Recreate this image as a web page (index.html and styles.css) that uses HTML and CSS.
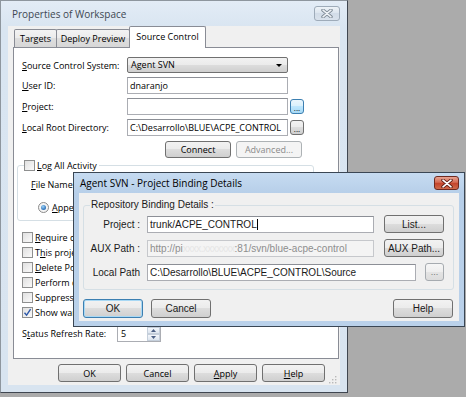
FILE: index.html
```html
<!DOCTYPE html>
<html lang="en">
<head>
    <meta charset="UTF-8">
    <title>Properties of Workspace</title>
    <link rel="stylesheet" href="styles.css">
</head>
<body>
    <!-- Main properties window (inactive) -->
    <div class="window main-window">
        <div class="titlebar">
            <span class="title">Properties of Workspace</span>
            <span class="close-btn inactive">
                <svg width="12" height="9" viewBox="0 0 12 9"><path d="M2 1.2 L10 7.8 M10 1.2 L2 7.8" stroke="#7d8995" stroke-width="3.4" stroke-linecap="round"/><path d="M2 1.2 L10 7.8 M10 1.2 L2 7.8" stroke="#eef2f6" stroke-width="1.6" stroke-linecap="round"/></svg>
            </span>
        </div>
        <div class="client">
            <div class="tabs">
                <div class="tab tab-targets">Targets</div>
                <div class="tab tab-deploy">Deploy Preview</div>
                <div class="tab tab-source selected">Source Control</div>
            </div>
            <div class="tab-panel">
                <div class="field-row combo-row">
                    <label><u>S</u>ource Control System:</label>
                    <div class="combo">Agent SVN<span class="combo-arrow"></span></div>
                </div>
                <div class="field-row">
                    <label><u>U</u>ser ID:</label>
                    <div class="textbox">dnaranjo</div>
                </div>
                <div class="field-row">
                    <label><u>P</u>roject:</label>
                    <div class="textbox"></div>
                    <div class="btn dots-btn hot">...</div>
                </div>
                <div class="field-row">
                    <label><u>L</u>ocal Root Directory:</label>
                    <div class="textbox">C:\Desarrollo\BLUE\ACPE_CONTROL</div>
                    <div class="btn dots-btn">...</div>
                </div>
                <div class="connect-row">
                    <div class="btn connect-btn">Connect</div>
                    <div class="btn connect-btn disabled">Advanced...</div>
                </div>
                <fieldset class="log-group">
                    <legend><span class="checkbox"></span><span><u>L</u>og All Activity</span></legend>
                    <div class="file-row">
                        <label><u>F</u>ile Name:</label>
                        <div class="textbox file-box"></div>
                    </div>
                    <div class="radio-row">
                        <span class="radio"></span><span><u>A</u>ppend</span>
                    </div>
                </fieldset>
                <div class="check-list">
                    <div class="check-row"><span class="checkbox"></span><span><u>R</u>equire comments</span></div>
                    <div class="check-row"><span class="checkbox"></span><span>T<u>h</u>is project</span></div>
                    <div class="check-row"><span class="checkbox"></span><span><u>D</u>elete Pool</span></div>
                    <div class="check-row"><span class="checkbox"></span><span>Perform check</span></div>
                    <div class="check-row"><span class="checkbox"></span><span>Suppress</span></div>
                    <div class="check-row"><span class="checkbox checked"><svg width="9" height="9" viewBox="0 0 9 9"><path d="M1.5 4.8 L3.6 7.2 L7.6 1.2" fill="none" stroke="#2d58a8" stroke-width="1.4"/></svg></span><span>Show warnings</span></div>
                </div>
                <div class="status-row">
                    <label>S<u>t</u>atus Refresh Rate:</label>
                    <div class="spinner">
                        <span class="spin-value">5</span>
                        <span class="spin-buttons">
                            <span class="spin-btn"><svg width="5" height="3" viewBox="0 0 5 3"><path d="M0 3 L2.5 0 L5 3Z" fill="#4d6185"/></svg></span>
                            <span class="spin-btn"><svg width="5" height="3" viewBox="0 0 5 3"><path d="M0 0 L2.5 3 L5 0Z" fill="#4d6185"/></svg></span>
                        </span>
                    </div>
                </div>
            </div>
            <div class="button-row">
                <div class="btn main-btn">OK</div>
                <div class="btn main-btn">Cancel</div>
                <div class="btn main-btn"><span><u>A</u>pply</span></div>
                <div class="btn main-btn"><span><u>H</u>elp</span></div>
            </div>
            <svg class="grip" width="9" height="9" viewBox="0 0 9 9">
                <rect x="7" y="1" width="1.4" height="1.4" fill="#b9b9b9"/>
                <rect x="4" y="4" width="1.4" height="1.4" fill="#b9b9b9"/>
                <rect x="7" y="4" width="1.4" height="1.4" fill="#b9b9b9"/>
                <rect x="1" y="7" width="1.4" height="1.4" fill="#b9b9b9"/>
                <rect x="4" y="7" width="1.4" height="1.4" fill="#b9b9b9"/>
                <rect x="7" y="7" width="1.4" height="1.4" fill="#b9b9b9"/>
            </svg>
        </div>
    </div>

    <!-- Binding details dialog (active, on top) -->
    <div class="window binding-dialog">
        <div class="titlebar">
            <span class="title">Agent SVN - Project Binding Details</span>
            <span class="close-btn active">
                <svg width="12" height="9" viewBox="0 0 12 9"><path d="M2 1.2 L10 7.8 M10 1.2 L2 7.8" stroke="#5e1e14" stroke-width="3.4" stroke-linecap="round"/><path d="M2 1.2 L10 7.8 M10 1.2 L2 7.8" stroke="#ffffff" stroke-width="1.7" stroke-linecap="round"/></svg>
            </span>
        </div>
        <div class="client dialog-client">
            <fieldset class="binding-group">
                <legend>Repository Binding Details :</legend>
                <div class="bind-row">
                    <label>Project :</label>
                    <div class="textbox bind-box">trunk/ACPE_CONTROL<span class="caret"></span></div>
                    <div class="btn bind-btn">List...</div>
                </div>
                <div class="bind-row">
                    <label>AUX Path :</label>
                    <div class="textbox bind-box readonly">http://pi<span class="redacted">xxxx.xxxxxxx</span>:81/svn/blue-acpe-control</div>
                    <div class="btn bind-btn">AUX Path...</div>
                </div>
                <div class="bind-row">
                    <label>Local Path</label>
                    <div class="textbox bind-box local-box">C:\Desarrollo\BLUE\ACPE_CONTROL\Source</div>
                    <div class="btn browse-btn">...</div>
                </div>
            </fieldset>
            <div class="dialog-buttons">
                <div class="btn dlg-btn default">OK</div>
                <div class="btn dlg-btn">Cancel</div>
                <div class="btn dlg-btn help-btn">Help</div>
            </div>
        </div>
    </div>
</body>
</html>
```

FILE: styles.css
```css
* {
    box-sizing: border-box;
}

body {
    margin: 0;
    width: 466px;
    height: 397px;
    overflow: hidden;
    position: relative;
    background: #ababab;
    font-family: "Open Sans", "Noto Sans", sans-serif;
    font-size: 9px;
    color: #000;
}

label {
    white-space: nowrap;
}

/* Window frames */
.window {
    display: flex;
    flex-direction: column;
    border: 1px solid #5f6973;
}

.main-window {
    width: 348px;
    height: 393px;
    background: linear-gradient(#e3ecf6, #d9e5f1 26px, #d8e4f0);
    border-color: #8e969e #3f4650 #3f4650 #8e969e;
}

.titlebar {
    height: 25px;
    flex-shrink: 0;
    display: flex;
    align-items: center;
    justify-content: space-between;
    padding: 0 7px 0 11px;
}

.title {
    font-size: 10px;
    color: #3d4752;
    white-space: nowrap;
}

.close-btn {
    width: 26px;
    height: 15px;
    border-radius: 3px;
    display: flex;
    align-items: center;
    justify-content: center;
}

.close-btn.inactive {
    border: 1px solid #9eabb9;
    background: linear-gradient(#eef3f8, #dbe4ee 50%, #d2dce8 50%, #d9e2ec);
}

.close-btn.active {
    border: 1px solid #6e2a20;
    background: linear-gradient(#e8a393, #d56a52 45%, #c4432b 50%, #cf6a4a);
}

.client {
    flex: 1;
    margin: 0 7px 7px;
    background: #f0f0f0;
    position: relative;
}

/* Tabs */
.tabs {
    height: 21px;
    display: flex;
    align-items: flex-end;
    margin-left: 6px;
}

.tab {
    height: 18px;
    display: flex;
    align-items: center;
    justify-content: center;
    border: 1px solid #898c95;
    border-bottom: none;
    border-radius: 2px 2px 0 0;
    background: linear-gradient(#f3f3f3, #ebebeb 50%, #dedede 50%, #d7d7d7);
    white-space: nowrap;
}

.tab-targets {
    width: 43px;
}

.tab-deploy {
    width: 74px;
    margin-left: -1px;
}

.tab-source {
    width: 77px;
    margin-left: -1px;
}

.tab.selected {
    height: 22px;
    margin-bottom: -1px;
    background: #fff;
    position: relative;
    z-index: 1;
    padding-bottom: 2px;
}

.tab-panel {
    width: 326px;
    height: 312px;
    margin-left: 5px;
    border: 1px solid #898c95;
    background: #fff;
    padding-top: 9px;
}

/* Form rows */
.field-row {
    display: grid;
    grid-template-columns: 103px 161px 14px;
    column-gap: 2px;
    align-items: center;
    height: 17px;
    margin: 0 0 4px 8px;
}

.combo-row {
    height: 16px;
}

.textbox {
    height: 17px;
    border: 1px solid #abadb3;
    border-top-color: #8c8f96;
    background: #fff;
    padding: 0 2px;
    line-height: 15px;
    white-space: nowrap;
    overflow: hidden;
}

.combo {
    height: 16px;
    border: 1px solid #707070;
    border-radius: 2px;
    background: linear-gradient(#f2f2f2, #ebebeb 50%, #dddddd 50%, #cfcfcf);
    padding: 0 3px;
    line-height: 14px;
    position: relative;
}

.combo-arrow {
    position: absolute;
    right: 5px;
    top: 6px;
    border-left: 3px solid transparent;
    border-right: 3px solid transparent;
    border-top: 3px solid #000;
}

.btn {
    display: flex;
    align-items: center;
    justify-content: center;
    border: 1px solid #707070;
    border-radius: 3px;
    background: linear-gradient(#f2f2f2, #ebebeb 50%, #dddddd 50%, #cfcfcf);
    white-space: nowrap;
}

.btn.disabled {
    border-color: #adb2b5;
    background: #f4f4f4;
    color: #8b8b8b;
}

.dots-btn {
    height: 15px;
    font-size: 8px;
    line-height: 1;
    padding-top: 2px;
}

.dots-btn.hot {
    border-color: #3c7fb1;
    background: linear-gradient(#eaf6fd, #d9f0fc 50%, #bee6fd 50%, #a7d9f5);
}

.connect-row {
    display: flex;
    justify-content: flex-end;
    gap: 5px;
    margin: 5px 36px 0 0;
}

.connect-btn {
    width: 66px;
    height: 17px;
}

/* Log group */
.log-group {
    width: 297px;
    height: 62px;
    margin: 1px 0 0 3px;
    padding: 0 0 0 6px;
    border: 1px solid #d5dfe5;
    border-radius: 3px;
}

.log-group legend {
    padding: 0 2px 0 0;
    height: 12px;
    display: flex;
    align-items: center;
    gap: 2px;
}

.checkbox {
    width: 11px;
    height: 11px;
    border: 1px solid #8e8f8f;
    background: linear-gradient(135deg, #e0e0e0, #fafafa);
    display: inline-flex;
    align-items: center;
    justify-content: center;
    flex-shrink: 0;
}

.file-row {
    display: flex;
    align-items: center;
    gap: 4px;
    height: 14px;
    margin: 6px 0 0 7px;
}

.file-box {
    width: 200px;
    height: 16px;
}

.radio-row {
    display: flex;
    align-items: center;
    gap: 3px;
    height: 14px;
    margin: 9px 0 0 14px;
}

.radio {
    width: 11px;
    height: 11px;
    border: 1px solid #8b8b8b;
    border-radius: 50%;
    background: #f4f4f4;
    display: inline-flex;
    align-items: center;
    justify-content: center;
}

.radio::after {
    content: "";
    width: 5px;
    height: 5px;
    border-radius: 50%;
    background: radial-gradient(circle at 40% 35%, #9fd4f7, #2a6fb8 70%, #1a4f8c);
}

.check-list {
    margin: 9px 0 0 8px;
}

.check-row {
    height: 15px;
    display: flex;
    align-items: center;
    gap: 2px;
    white-space: nowrap;
}

.status-row {
    display: flex;
    align-items: center;
    height: 17px;
    margin: 5px 0 0 8px;
}

.status-row label {
    width: 95px;
}

.spinner {
    width: 44px;
    height: 16px;
    border: 1px solid #abadb3;
    background: #fff;
    display: flex;
}

.spin-value {
    flex: 1;
    padding-left: 3px;
    line-height: 14px;
}

.spin-buttons {
    width: 13px;
    display: flex;
    flex-direction: column;
}

.spin-btn {
    flex: 1;
    display: flex;
    align-items: center;
    justify-content: center;
    background: linear-gradient(#f4f7fb, #dde5ef);
    border: 1px solid #c5cfdb;
}

.button-row {
    display: flex;
    justify-content: flex-end;
    gap: 5px;
    margin: 5px 15px 0 0;
}

.main-btn {
    width: 63px;
    height: 18px;
}

.grip {
    position: absolute;
    right: 3px;
    bottom: 1px;
}

/* Binding dialog */
.binding-dialog {
    position: absolute;
    left: 73px;
    top: 172px;
    width: 392px;
    height: 155px;
    border-color: #3a4654;
    background: linear-gradient(#c6dbf1, #b7cfe9 20px, #bad1ea);
}

.binding-dialog .titlebar {
    height: 20px;
    padding: 0 5px 0 6px;
}

.binding-dialog .title {
    color: #000;
}

.binding-dialog .close-btn {
    width: 25px;
    height: 14px;
}

.dialog-client {
    margin: 0 5px 5px;
    font-family: "Liberation Sans", Arial, sans-serif;
    font-size: 10px;
    color: #1a1a1a;
}

.binding-group {
    width: 371px;
    margin: 6px 0 0 4px;
    padding: 0 0 8px 0;
    border: 1px solid #d5dfe5;
    border-radius: 3px;
}

.binding-group legend {
    margin-left: 6px;
    padding: 0 1px;
    height: 12px;
    line-height: 12px;
}

.bind-row {
    display: flex;
    align-items: center;
    height: 18px;
    margin-top: 6px;
}

.bind-row:first-of-type {
    margin-top: 4px;
}

.bind-row label {
    width: 56px;
    text-align: right;
    margin-right: 7px;
}

.bind-box {
    width: 227px;
    height: 17px;
    line-height: 15px;
}

.bind-box.readonly {
    background: #f4f4f4;
    border-color: #c6c8cc;
    color: #8e8e8e;
}

.redacted {
    color: #e6e6e6;
    letter-spacing: -0.5px;
}

.caret {
    display: inline-block;
    width: 1px;
    height: 11px;
    background: #000;
    vertical-align: -2px;
}

.bind-btn {
    width: 60px;
    height: 18px;
    margin-left: 10px;
}

.local-box {
    width: 269px;
}

.browse-btn {
    width: 19px;
    height: 18px;
    margin-left: 9px;
    color: #777;
    font-size: 9px;
    border-color: #a6abb0;
    background: linear-gradient(#f6f6f6, #eeeeee 50%, #e4e4e4 50%, #dcdcdc);
}

.dialog-buttons {
    display: flex;
    gap: 8px;
    margin: 9px 6px 0 4px;
}

.dlg-btn {
    width: 60px;
    height: 19px;
}

.dlg-btn.default {
    border-color: #3c7fb1;
    box-shadow: inset 0 0 0 1px #a8d8f4;
}

.help-btn {
    margin-left: auto;
}
```
